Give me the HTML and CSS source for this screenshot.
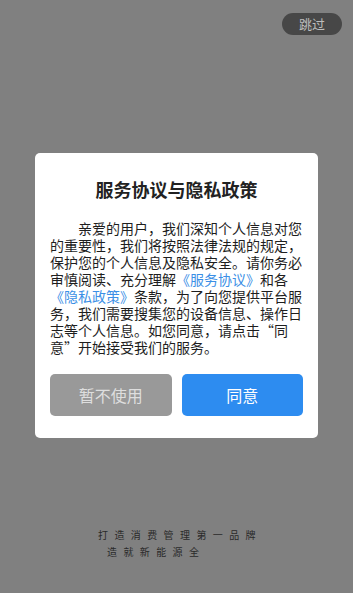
FILE: index.html
```html
<!DOCTYPE html>
<html lang="zh-CN">
<head>
<meta charset="utf-8">
<link rel="stylesheet" href="styles.css">
</head>
<body>
<div class="screen">
  <div class="topbar"><span class="skip">跳过</span></div>
  <div class="dialog">
    <h1 class="title">服务协议与隐私政策</h1>
    <p class="body">亲爱的用户，我们深知个人信息对您的重要性，我们将按照法律法规的规定，保护您的个人信息及隐私安全。请你务必审慎阅读、充分理解<span class="link">《服务协议》</span>和各<br><span class="link">《隐私政策》</span>条款，为了向您提供平台服务，我们需要搜集您的设备信息、操作日志等个人信息。如您同意，请点击“同<br>意”开始接受我们的服务。</p>
    <div class="actions">
      <button class="btn btn-decline">暂不使用</button>
      <button class="btn btn-agree">同意</button>
    </div>
  </div>
  <div class="slogan">
    <div class="slogan-line">打造消费管理第一品牌</div>
    <div class="slogan-line second">造就新能源全</div>
  </div>
</div>
</body>
</html>
```
FILE: styles.css
```css
html, body {
  margin: 0;
  padding: 0;
}
body {
  background: #808080;
  font-family: "Noto Sans CJK SC", "Noto Sans", sans-serif;
  width: 353px;
  height: 593px;
  overflow: hidden;
}
.screen {
  display: flex;
  flex-direction: column;
  height: 593px;
}
.topbar {
  display: flex;
  justify-content: flex-end;
  padding: 13px 11px 0 0;
}
.skip {
  width: 60px;
  height: 22px;
  border-radius: 11px;
  background: #474747;
  color: #bdbdbd;
  font-size: 13px;
  line-height: 22px;
  text-align: center;
}
.dialog {
  margin: 118px 0 0 35px;
  width: 283px;
  box-sizing: border-box;
  background: #fff;
  border-radius: 5px;
  padding: 23px 15px 22px 15px;
}
.title {
  margin: 0;
  font-size: 18px;
  line-height: 26px;
  font-weight: bold;
  color: #222;
  text-align: center;
}
.body {
  margin: 18px 0 0 0;
  font-size: 14px;
  line-height: 17px;
  color: #1e1e1e;
  text-indent: 28px;
  width: 254px;
}
.link {
  color: #3b8fe6;
}
.actions {
  display: flex;
  gap: 10px;
  margin-top: 18px;
}
.btn {
  width: 122px;
  height: 42px;
  border: none;
  border-radius: 5px;
  font-family: "Noto Sans CJK SC", "Noto Sans", sans-serif;
  font-size: 16px;
  padding: 0;
}
.btn-decline {
  background: #999999;
  color: #dedede;
}
.btn-agree {
  background: #2d8cf0;
  color: #ffffff;
}
.slogan {
  margin: 88px 0 0 98px;
  color: #2a2a2a;
  font-size: 10px;
  line-height: 17px;
  letter-spacing: 6.4px;
}
.slogan-line.second {
  padding-left: 9px;
}
```
